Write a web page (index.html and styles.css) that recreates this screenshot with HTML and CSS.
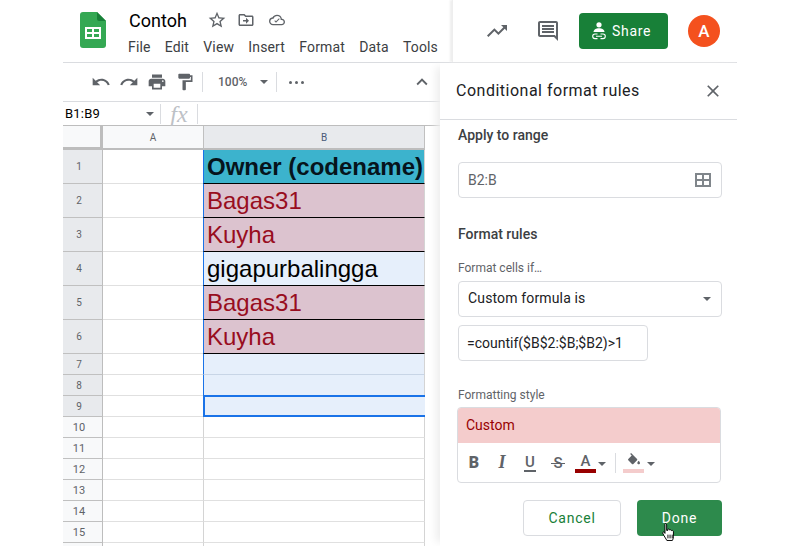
FILE: index.html
```html
<!DOCTYPE html>
<html lang="en">
<head>
    <meta charset="UTF-8">
    <title>Contoh - Google Sheets</title>
    <link rel="stylesheet" href="styles.css">
</head>
<body>

<div class="page">
    <header class="topbar">
        <svg class="logo" width="26" height="36" viewBox="0 0 26 36">
            <path fill="#34a853" d="M3 0h14l9 9v24a3 3 0 0 1-3 3H3a3 3 0 0 1-3-3V3a3 3 0 0 1 3-3z"/>
            <path fill="#188038" d="M17 0l9 9h-7a2 2 0 0 1-2-2z"/>
            <path fill="#fff" d="M5 15h16v12H5z"/>
            <path fill="#34a853" d="M7 17h5v3H7zm7 0h5v3h-5zm-7 5h5v3H7zm7 0h5v3h-5z"/>
        </svg>
        <div class="doc">
            <div class="doc-title">
                <span class="doc-name">Contoh</span>
                <svg class="ico" width="20" height="20" viewBox="0 0 24 24"><path d="M22 9.24l-7.19-.62L12 2 9.19 8.63 2 9.24l5.46 4.73L5.82 21 12 17.27 18.18 21l-1.63-7.03L22 9.24zM12 15.4l-3.76 2.27 1-4.28-3.32-2.88 4.38-.38L12 6.1l1.71 4.04 4.38.38-3.32 2.88 1 4.28L12 15.4z"/></svg>
                <svg class="ico move-ico" width="18" height="18" viewBox="0 0 24 24"><path d="M20 6h-8l-2-2H4c-1.1 0-2 .9-2 2v12c0 1.1.9 2 2 2h16c1.1 0 2-.9 2-2V8c0-1.1-.9-2-2-2zm0 12H4V6h5.17l2 2H20v10zm-8-1l4-4-4-4v3H8v2h4v3z"/></svg>
                <svg class="ico cloud-ico" width="16" height="16" viewBox="0 0 24 24"><path d="M19.35 10.04A7.49 7.49 0 0 0 12 4C9.11 4 6.6 5.64 5.35 8.04A5.994 5.994 0 0 0 0 14c0 3.31 2.69 6 6 6h13c2.76 0 5-2.24 5-5 0-2.64-2.05-4.78-4.65-4.96zM19 18H6c-2.21 0-4-1.79-4-4s1.79-4 4-4h.71A5.5 5.5 0 0 1 12 6a5.5 5.5 0 0 1 5.5 5.5v.5H19a3 3 0 0 1 0 6zm-8.5-2L8 13.5l1-1 1.5 1.5L15 9.5l1 1z"/></svg>
            </div>
            <nav class="menu">
                <span>File</span>
                <span>Edit</span>
                <span>View</span>
                <span>Insert</span>
                <span>Format</span>
                <span>Data</span>
                <span>Tools</span>
            </nav>
        </div>
        <div class="top-actions">
            <svg class="ico" width="24" height="24" viewBox="0 0 24 24"><path d="M16 6l2.29 2.29-4.88 4.88-4-4L2 16.59 3.41 18l6-6 4 4 6.3-6.29L22 12V6z"/></svg>
            <svg class="ico" width="24" height="24" viewBox="0 0 24 24"><path d="M21.99 4c0-1.1-.89-2-1.99-2H4c-1.1 0-2 .9-2 2v12c0 1.1.9 2 2 2h14l4 4-.01-18zM20 4v13.17L18.83 16H4V4h16zM6 12h12v2H6zm0-3h12v2H6zm0-3h12v2H6z"/></svg>
            <button class="share">
                <svg width="14" height="18" viewBox="0 0 14 18" fill="#fff">
                    <circle cx="7" cy="2.800" r="2.600"/>
                    <path d="M1.500 10c0-2.400 2.600-3.800 5.500-3.800s5.500 1.400 5.500 3.800z"/>
                    <path fill="none" stroke="#fff" stroke-width="1.100" d="M5.500 12H3a2.300 2.300 0 0 0 0 4.600h2.500m3-4.600H11a2.300 2.300 0 0 1 0 4.600H8.500M4 14.300h6"/>
                </svg>
                Share
            </button>
            <span class="avatar">A</span>
        </div>
    </header>

    <div class="main">
        <section class="sheet">
            <div class="toolbar">
                <svg class="ico" width="20" height="20" viewBox="0 0 24 24"><path d="M12.5 8c-2.650 0-5.050.99-6.900 2.600L2 7v9h9l-3.620-3.620c1.390-1.160 3.160-1.880 5.120-1.880 3.540 0 6.550 2.310 7.600 5.500l2.370-.78C21.080 11.030 17.150 8 12.500 8z"/></svg>
                <svg class="ico" width="20" height="20" viewBox="0 0 24 24"><path d="M18.400 10.600C16.550 8.990 14.150 8 11.500 8c-4.650 0-8.580 3.030-9.960 7.220L3.900 16c1.050-3.190 4.050-5.500 7.600-5.500 1.950 0 3.730.72 5.120 1.880L13 16h9V7l-3.600 3.600z"/></svg>
                <svg class="ico" width="20" height="20" viewBox="0 0 24 24"><path d="M19 8H5c-1.660 0-3 1.340-3 3v6h4v4h12v-4h4v-6c0-1.660-1.340-3-3-3zm-3 11H8v-5h8v5zm3-7c-.55 0-1-.45-1-1s.45-1 1-1 1 .45 1 1-.45 1-1 1zm-1-9H6v4h12V3z"/></svg>
                <svg class="ico" width="20" height="20" viewBox="0 0 24 24"><path d="M18 4V3c0-.55-.45-1-1-1H5c-.55 0-1 .45-1 1v4c0 .55.45 1 1 1h12c.55 0 1-.45 1-1V6h1v4H9v11c0 .55.45 1 1 1h2c.55 0 1-.45 1-1v-9h8V4h-3z"/></svg>
                <i class="sep"></i>
                <span class="zoom-level">100%</span>
                <i class="caret"></i>
                <i class="sep sep-zoom"></i>
                <span class="more"><i></i><i></i><i></i></span>
                <svg class="ico collapse" width="22" height="22" viewBox="0 0 24 24"><path d="M12 8l-6 6 1.410 1.410L12 10.830l4.590 4.580L18 14z"/></svg>
            </div>

            <div class="formula-bar">
                <span class="name-box">B1:B9</span>
                <i class="caret"></i>
                <i class="sep sep-name"></i>
                <span class="fx">fx</span>
                <i class="sep"></i>
            </div>

            <div class="grid">
                <div class="corner"></div>
                <div class="col-head">A</div>
                <div class="col-head active">B</div>

                <div class="row-head active tall">1</div>
                <div class="cell tall"></div>
                <div class="cell tall data head-cell">Owner (codename)</div>

                <div class="row-head active tall">2</div>
                <div class="cell tall"></div>
                <div class="cell tall data dupe">Bagas31</div>

                <div class="row-head active tall">3</div>
                <div class="cell tall"></div>
                <div class="cell tall data dupe">Kuyha</div>

                <div class="row-head active tall">4</div>
                <div class="cell tall"></div>
                <div class="cell tall data picked">gigapurbalingga</div>

                <div class="row-head active tall">5</div>
                <div class="cell tall"></div>
                <div class="cell tall data dupe">Bagas31</div>

                <div class="row-head active tall">6</div>
                <div class="cell tall"></div>
                <div class="cell tall data dupe">Kuyha</div>

                <div class="row-head active">7</div>
                <div class="cell"></div>
                <div class="cell picked-empty"></div>

                <div class="row-head active">8</div>
                <div class="cell"></div>
                <div class="cell picked-empty"></div>

                <div class="row-head active">9</div>
                <div class="cell"></div>
                <div class="cell current"></div>

                <div class="row-head big">10</div><div class="cell"></div><div class="cell"></div>
                <div class="row-head big">11</div><div class="cell"></div><div class="cell"></div>
                <div class="row-head big">12</div><div class="cell"></div><div class="cell"></div>
                <div class="row-head big">13</div><div class="cell"></div><div class="cell"></div>
                <div class="row-head big">14</div><div class="cell"></div><div class="cell"></div>
                <div class="row-head big">15</div><div class="cell"></div><div class="cell"></div>
                <div class="row-head big"></div><div class="cell"></div><div class="cell"></div>
            </div>
        </section>

        <aside class="sidebar">
            <div class="side-head">
                <h2>Conditional format rules</h2>
                <svg class="ico" width="20" height="20" viewBox="0 0 24 24"><path d="M19 6.410L17.590 5 12 10.590 6.410 5 5 6.410 10.590 12 5 17.590 6.410 19 12 13.410 17.590 19 19 17.590 13.410 12z"/></svg>
            </div>
            <div class="side-body">
                <h3 class="apply-title">Apply to range</h3>
                <div class="field range-field">
                    <span>B2:B</span>
                    <svg width="16" height="14" viewBox="0 0 16 14" fill="none" stroke="#80868b" stroke-width="2"><path d="M1 1h14v12H1zM8 1v12M1 7h14"/></svg>
                </div>

                <h3 class="rules-title">Format rules</h3>
                <label class="small-label if-label">Format cells if…</label>
                <div class="field select-field">
                    <span>Custom formula is</span>
                    <i class="caret"></i>
                </div>
                <div class="field formula-field">=countif($B$2:$B;$B2)&gt;1</div>

                <label class="small-label style-label">Formatting style</label>
                <div class="style-box">
                    <div class="style-preview">Custom</div>
                    <div class="style-tools">
                        <span class="tool"><span class="tool-b">B</span></span>
                        <span class="tool"><span class="tool-i">I</span></span>
                        <span class="tool"><span class="tool-u">U</span></span>
                        <span class="tool"><span class="tool-s">S</span></span>
                        <span class="color-tool text-color">
                            <span class="tool-a">A</span>
                            <i class="swatch swatch-text"></i>
                        </span>
                        <i class="caret caret-small"></i>
                        <i class="sep"></i>
                        <span class="color-tool fill-tool">
                            <svg class="ico" width="16" height="16" viewBox="0 0 24 24"><path d="M16.560 8.940L7.620 0 6.210 1.410l2.380 2.380-5.150 5.150c-.59.59-.59 1.540 0 2.120l5.500 5.500c.29.29.68.44 1.060.44s.77-.15 1.060-.44l5.500-5.500c.59-.58.59-1.530 0-2.120zM19 11.500s-2 2.170-2 3.500c0 1.100.9 2 2 2s2-.9 2-2c0-1.330-2-3.500-2-3.500z"/></svg>
                            <i class="swatch swatch-fill"></i>
                        </span>
                        <i class="caret caret-small caret-fill"></i>
                    </div>
                </div>

                <div class="actions">
                    <button class="btn-cancel">Cancel</button>
                    <button class="btn-done">Done
                        <svg class="hand" width="16" height="18" viewBox="1 1 13 17">
                            <path fill="#fff" stroke="#000" stroke-width=".9" d="M4 1.500c.8 0 1.300.5 1.300 1.300V8l1 .1V7c.9-.5 1.600-.2 1.700.6.900-.5 1.600-.2 1.800.6 1-.4 1.900 0 1.900 1V14c0 1.500-.5 2.500-1 3.500H5.500L2.800 13 1.500 10.500c0-.9.800-1.200 1.500-.7l.7 1V2.800c0-.8-.3-1.300.3-1.300z"/>
                            <path stroke="#000" stroke-width=".9" d="M6.500 12v3.500M8.500 12v3.500M10.500 12v3.500"/>
                        </svg>
                    </button>
                </div>
            </div>
        </aside>
    </div>
</div>

</body>
</html>
```

FILE: styles.css
```css
* {
    box-sizing: border-box;
}

body {
    margin: 0;
    background: white;
    font-family: Roboto, Arial, sans-serif;
    color: #202124;
}

.page {
    width: 674px;
    height: 546px;
    margin-left: 63px;
    overflow: hidden;
}

.ico {
    fill: #5f6368;
    flex: none;
}

.caret {
    flex: none;
    width: 0;
    height: 0;
    border-left: 4px solid transparent;
    border-right: 4px solid transparent;
    border-top: 4px solid #5f6368;
}

.sep {
    flex: none;
    width: 1px;
    height: 20px;
    background: #dadce0;
}

/* top bar */
.topbar {
    display: flex;
    height: 63px;
    border-bottom: 1px solid #dadce0;
}

.logo {
    flex: none;
    margin: 12px 0 0 17px;
}

.doc {
    width: 323px;
    margin-left: 23px;
    flex: none;
}

.doc-title {
    display: flex;
    align-items: center;
    height: 24px;
    margin-top: 8px;
}

.doc-name {
    width: 78px;
    font-size: 18px;
    color: #000;
}

.move-ico {
    margin-left: 10px;
}

.cloud-ico {
    margin-left: 14px;
}

.menu {
    display: flex;
    gap: 14.2px;
    margin-top: 7px;
    margin-left: -1px;
    font-size: 14px;
    letter-spacing: 0.15px;
    line-height: 16px;
    color: #3c4043;
}

.top-actions {
    display: flex;
    align-items: center;
    flex: none;
    width: 287px;
    height: 62px;
    padding-left: 32px;
    border-left: 1px solid #eee;
    box-shadow: -2px 0 2px #eee;
}

.top-actions svg + svg {
    margin-left: 27px;
}

.share {
    display: flex;
    align-items: center;
    gap: 6px;
    width: 89px;
    height: 36px;
    margin-left: 19px;
    padding: 0 0 0 13px;
    border: none;
    border-radius: 4px;
    background: #188038;
    color: white;
    font-family: Roboto, Arial, sans-serif;
    font-size: 14px;
    letter-spacing: 0.7px;
}

.avatar {
    display: flex;
    align-items: center;
    justify-content: center;
    width: 32px;
    height: 32px;
    margin-left: 20px;
    border-radius: 50%;
    background: #f4511e;
    color: white;
    font-size: 17px;
    font-weight: 500;
}

/* sheet */
.main {
    display: flex;
    height: 483px;
}

.sheet {
    width: 377px;
    flex: none;
}

.toolbar {
    display: flex;
    align-items: center;
    height: 39px;
    padding-left: 28px;
    border-bottom: 1px solid #dadce0;
}

.toolbar svg + svg {
    margin-left: 8px;
}

.toolbar .sep {
    margin-left: 7px;
}

.zoom-level {
    margin-left: 15px;
    font-size: 12px;
    font-weight: 500;
    color: #5f6368;
}

.toolbar .caret {
    margin-left: 13px;
}

.toolbar .sep-zoom {
    margin-left: 8px;
}

.more {
    display: flex;
    gap: 3px;
    margin-left: 12px;
}

.more i {
    width: 3px;
    height: 3px;
    border-radius: 50%;
    background: #5f6368;
}

.toolbar .collapse {
    margin-left: auto;
    margin-right: 7px;
}

.formula-bar {
    display: flex;
    align-items: center;
    height: 24px;
    border-bottom: 1px solid #bdbdbd;
}

.name-box {
    width: 83px;
    padding-left: 2px;
    font-size: 13px;
    letter-spacing: 0.2px;
    color: #000;
}

.sep-name {
    margin-left: 6px;
}

.fx {
    width: 36px;
    text-align: center;
    font-family: "Liberation Serif", serif;
    font-size: 24px;
    line-height: 20px;
    font-style: italic;
    color: #bdc1c6;
}

.grid {
    display: grid;
    grid-template-columns: 40px 101px 221px;
    grid-auto-rows: 21px;
    grid-template-rows: 24px repeat(6, 34px);
}

.corner {
    background: #f8f9fa;
    border-right: 3px solid #bdbdbd;
    border-bottom: 3px solid #bdbdbd;
}

.col-head {
    display: flex;
    align-items: center;
    justify-content: center;
    background: #f8f9fa;
    border-right: 1px solid #c0c0c0;
    border-bottom: 2px solid #bdbdbd;
    font-size: 10px;
    color: #5f6368;
}

.col-head.active {
    padding-left: 20px;
    background: #e8eaed;
    color: #4a5a78;
}

.row-head {
    display: flex;
    align-items: center;
    justify-content: center;
    padding-right: 7px;
    background: #f8f9fa;
    border-right: 1px solid #bdbdbd;
    border-bottom: 1px solid #c0c0c0;
    font-size: 10px;
    color: #5f6368;
}

.row-head.active {
    background: #e8eaed;
}

.row-head.big {
    font-size: 11px;
}

.cell {
    border-right: 1px solid #d4d4d4;
    border-bottom: 1px solid #e0e0e0;
}

.data {
    display: flex;
    align-items: center;
    margin-left: -1px;
    padding-left: 3px;
    border-bottom-color: #000;
    border-left: 1px solid #1a73e8;
    font-family: "Liberation Sans", Arial, sans-serif;
    font-size: 24px;
    white-space: nowrap;
    overflow: hidden;
}

.head-cell {
    background: #3cb3cd;
    font-weight: bold;
    color: #06141c;
}

.dupe {
    background: #dcc3cf;
    color: #980d20;
}

.picked {
    background: #e6effb;
    color: #000;
}

.picked-empty {
    margin-left: -1px;
    background: #e6effb;
    border-left: 1px solid #1a73e8;
    border-bottom-color: #c8d5e6;
}

.current {
    margin-top: -1px;
    margin-left: -1px;
    background: #e6effb;
    border: 2px solid #1a73e8;
    border-right: none;
}

/* sidebar */
.sidebar {
    position: relative;
    width: 297px;
    flex: none;
    background: white;
    box-shadow: -8px 0 8px -4px #eee;
}

.side-head {
    display: flex;
    align-items: center;
    justify-content: space-between;
    height: 57px;
    padding: 0 14px 0 16px;
    border-bottom: 1px solid #dadce0;
}

.side-head h2 {
    margin: 0 0 2px;
    font-size: 16px;
    font-weight: 400;
    letter-spacing: 0.5px;
    color: #202124;
}

.side-body {
    padding: 0 15px 0 18px;
}

h3 {
    margin: 0;
    font-size: 14px;
    font-weight: 500;
    line-height: 16px;
    color: #3c4043;
}

.apply-title {
    margin-top: 7px;
}

.small-label {
    display: block;
    font-size: 12px;
    line-height: 14px;
    color: #5f6368;
}

.field {
    display: flex;
    align-items: center;
    height: 36px;
    padding: 0 9px;
    border: 1px solid #dadce0;
    border-radius: 4px;
    font-size: 14px;
    color: #202124;
}

.range-field {
    justify-content: space-between;
    margin-top: 19px;
    padding-right: 10px;
    color: #5f6368;
}

.rules-title {
    margin-top: 28px;
}

.if-label {
    margin-top: 19px;
}

.select-field {
    justify-content: space-between;
    margin-top: 6px;
    padding-right: 10px;
}

.select-field span {
    margin-bottom: 2px;
    letter-spacing: 0.15px;
}

.formula-field {
    width: 190px;
    margin-top: 8px;
    padding: 0 8px;
}

.style-label {
    margin-top: 27px;
}

.style-box {
    width: 264px;
    height: 76px;
    margin-top: 5px;
    margin-left: -1px;
    border: 1px solid #dadce0;
    border-radius: 4px;
    overflow: hidden;
}

.style-preview {
    display: flex;
    align-items: center;
    height: 35px;
    padding: 0 0 2px 8px;
    background: #f4cccc;
    font-size: 14px;
    color: #980000;
}

.style-tools {
    display: flex;
    align-items: center;
    height: 39px;
    padding-left: 2px;
    color: #5f6368;
}

.tool {
    flex: none;
    width: 28px;
    text-align: center;
    font-size: 16px;
    line-height: 16px;
}

.tool-b {
    font-weight: 900;
}

.tool-i {
    font-family: "Liberation Serif", serif;
    font-size: 18px;
    font-style: italic;
    font-weight: bold;
}

.tool-u {
    display: inline-block;
    width: 12px;
    font-size: 15px;
    font-weight: 500;
    line-height: 15px;
    border-bottom: 2px solid #5f6368;
}

.tool-s {
    position: relative;
    display: inline-block;
    font-size: 15px;
    font-weight: 500;
}

/* strike line is wider than the letter */
.tool-s::after {
    content: "";
    position: absolute;
    left: -2.500px;
    right: -2.500px;
    top: 8px;
    height: 1.500px;
    background: #5f6368;
}

.color-tool {
    display: flex;
    flex-direction: column;
    align-items: center;
    width: 21px;
    flex: none;
}

.text-color {
    margin-left: 3px;
}

.tool-a {
    font-size: 15px;
    font-weight: 500;
    line-height: 16px;
}

.fill-tool {
    margin-left: 7px;
}

.swatch {
    display: block;
    width: 21px;
    height: 4px;
}

.swatch-text {
    background: #980000;
}

.swatch-fill {
    background: #f4cccc;
}

.caret-small {
    margin-left: 2px;
    margin-top: 2px;
}

.caret-fill {
    margin-left: 3px;
}

.style-tools .sep {
    margin-left: 9px;
}

.actions {
    display: flex;
    justify-content: flex-end;
    gap: 16px;
    margin-top: 17px;
}

.actions button {
    height: 36px;
    padding: 0;
    border-radius: 4px;
    font-family: Roboto, Arial, sans-serif;
    font-size: 14px;
    letter-spacing: 0.75px;
}

.btn-cancel {
    width: 98px;
    border: 1px solid #dadce0;
    background: white;
    color: #188038;
}

.btn-done {
    position: relative;
    width: 85px;
    border: none;
    background: #2d8a4c;
    color: white;
}

/* mouse pointer over the button */
.hand {
    position: absolute;
    left: 24px;
    top: 23px;
}
```
